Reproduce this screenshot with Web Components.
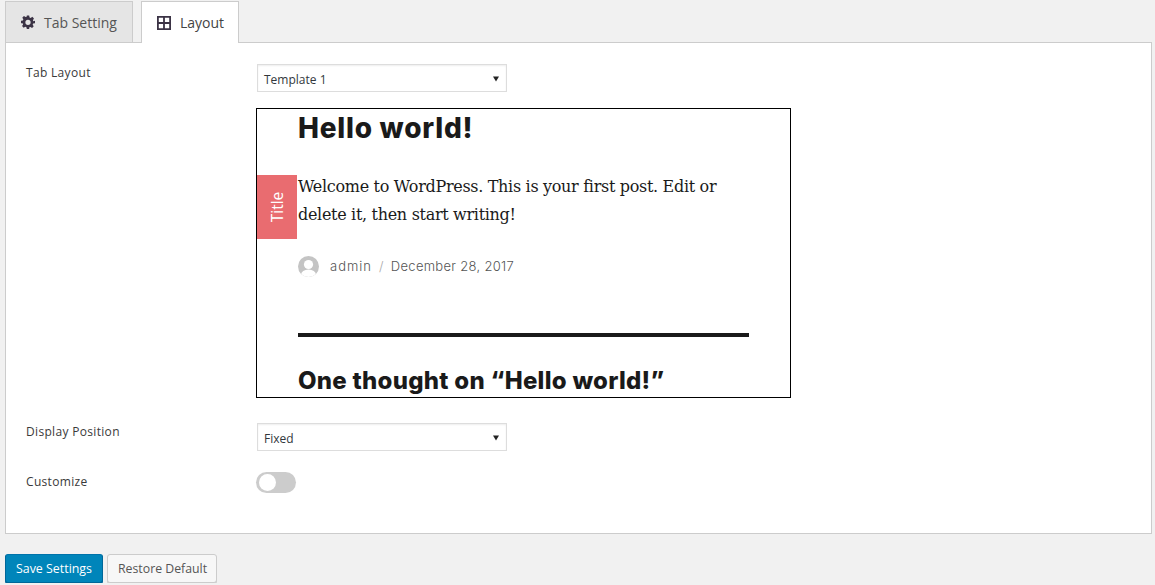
<!DOCTYPE html>
<html>
<head>
<meta charset="utf-8">
<title>Layout</title>
<style>
html, body { margin: 0; background: #f1f1f1; }
body { font-family: "Open Sans", "Noto Sans", sans-serif; color: #444; font-size: 13px; }
</style>
</head>
<body>
<settings-page></settings-page>

<template id="tab-tpl">
  <style>
    :host {
      display: flex; align-items: center; box-sizing: border-box; height: 41px;
      gap: 9px; padding: 0 15px; border: 1px solid #ccc; border-bottom: 0;
      background: #e5e5e5; color: #555; font-size: 14px; margin-bottom: 0;
    }
    :host([active]) { background: #fff; color: #444; height: 42px; margin-bottom: -1px; padding-right: 14px; position: relative; }
    ::slotted(svg) { display: block; }
  </style>
  <slot name="icon"></slot><slot></slot>
</template>

<template id="row-tpl">
  <style>
    :host { display: grid; grid-template-columns: 231px 1fr; }
    .label { font-size: 12px; font-weight: 500; color: #3a3a3a; line-height: 16px; padding-top: var(--label-top, 0); letter-spacing: .32px; }
    .body { display: flex; flex-direction: column; gap: 16px; align-items: flex-start; }
  </style>
  <div class="label"><slot name="label"></slot></div>
  <div class="body"><slot></slot></div>
</template>

<template id="select-tpl">
  <style>
    :host {
      display: flex; align-items: center; justify-content: space-between; box-sizing: border-box;
      width: 250px; height: 28px; padding: 2px 7px 0 6px; background: #fff; border: 1px solid #ddd;
      font-size: 12px; color: #32373c; box-shadow: inset 0 1px 2px rgba(0,0,0,.07);
    }
    svg { display: block; }
  </style>
  <slot></slot>
  <svg width="6" height="6" viewBox="0 0 6 6"><path d="M0 .5h6L3 5.500z" fill="#222"/></svg>
</template>

<template id="toggle-tpl">
  <style>
    :host { display: flex; align-items: center; box-sizing: border-box; width: 40px; height: 21px; margin-left: -1px; padding-left: 3px; border-radius: 11px; background: #ccc; }
    i { display: block; width: 17px; height: 17px; border-radius: 50%; background: #fff; }
  </style>
  <i></i>
</template>

<template id="preview-tpl">
  <style>
    :host {
      display: block; box-sizing: border-box; width: 535px; height: 290px; margin-left: -1px;
      border: 1px solid #000; background: #fff; overflow: hidden; position: relative; color: #1a1a1a;
    }
    .badge {
      position: absolute; left: 0; top: 66px; width: 40px; height: 64px; background: #e96c70; color: #fff;
      display: flex; align-items: center; justify-content: center; font-size: 15.5px;
      font-family: "Open Sans", sans-serif;
    }
    .badge span { transform: rotate(-90deg); white-space: nowrap; }
    .post { padding: 0 41px; }
    h1, h2 { font-family: Inter, "Noto Sans", sans-serif; margin: 0; color: #1a1a1a; font-weight: 800; }
    h1 { font-size: 28px; line-height: 38px; letter-spacing: .75px; }
    p { font-family: "DejaVu Serif", "Liberation Serif", serif; font-size: 16px; line-height: 28px; margin: 26px 0 0; color: #1a1a1a; letter-spacing: -.31px; }
    .meta { display: flex; align-items: center; height: 22px; margin-top: 26px; font-family: Inter, sans-serif; font-size: 13px; font-weight: 300; color: #555; letter-spacing: .3px; }
    .meta svg { display: block; margin-right: 11px; }
    .meta .who { letter-spacing: 1px; }
    .meta .sep { margin: 0 7px; color: #aaa; }
    hr { border: 0; height: 4px; background: #1a1a1a; margin: 56px 0 0; }
    h2 { font-size: 24px; line-height: 32px; margin-top: 28px; letter-spacing: .27px; }
  </style>
  <div class="badge"><span>Title</span></div>
  <div class="post">
    <h1>Hello world!</h1>
    <p>Welcome to WordPress. This is your first post. Edit or<br>delete it, then start writing!</p>
    <div class="meta">
      <svg width="21" height="21" viewBox="0 0 21 21">
        <defs><clipPath id="av"><circle cx="10.5" cy="10.5" r="10.5"/></clipPath></defs>
        <g clip-path="url(#av)">
          <rect width="21" height="21" fill="#c4c4c4"/>
          <circle cx="10.5" cy="8.5" r="4.6" fill="#fff"/>
          <ellipse cx="10.5" cy="19" rx="7.5" ry="5.5" fill="#fff"/>
        </g>
      </svg>
      <span class="who">admin</span><span class="sep">/</span><span>December 28, 2017</span>
    </div>
    <hr>
    <h2>One thought on “Hello world!”</h2>
  </div>
</template>

<template id="page-tpl">
  <style>
    :host { display: block; padding: 1px 3px 0 5px; }
    .tabs { display: flex; gap: 8px; height: 41px; align-items: flex-end; }
    .panel {
      box-sizing: border-box; height: 492px; background: #fff; border: 1px solid #ccc;
      padding: 21px 20px 0; display: flex; flex-direction: column;
    }
    form-row { --label-top: 1px; }
    .r2 { margin-top: 25px; }
    .r3 { margin-top: 21px; --label-top: 2px; }
    .footer { display: flex; gap: 4px; margin-top: 20px; }
    .btn {
      box-sizing: border-box; height: 29px; display: flex; align-items: center; padding: 0 9px 0 10px;
      font-size: 12.3px; border-radius: 3px; border: 1px solid #ccc; background: #f7f7f7; color: #555;
      box-shadow: 0 1px 0 #ccc;
    }
    .btn.primary { padding: 0 10px; font-size: 12.4px; background: #0085ba; border-color: #0073aa #006799 #006799; color: #fff; box-shadow: 0 1px 0 #006799; }
  </style>
  <div class="tabs">
    <tab-item>
      <svg slot="icon" width="14" height="14" viewBox="0 0 24 24"><path fill="#3b3345" fill-rule="evenodd" d="M10 1h4l.7 3.2 1.9.8 2.8-1.8 2.8 2.8-1.8 2.8.8 1.9L24 10v4l-3.2.7-.8 1.9 1.8 2.8-2.8 2.8-2.800-1.800-1.900.8L14 24h-4l-.7-3.200-1.900-.8-2.800 1.800-2.800-2.800 1.800-2.800-.8-1.900L0 14v-4l3.200-.7.8-1.900-1.800-2.800 2.800-2.800 2.800 1.800 1.900-.8zM12 8a4.500 4.500 0 1 0 0 9 4.500 4.500 0 0 0 0-9z"/></svg>
      Tab Setting
    </tab-item>
    <tab-item active>
      <svg slot="icon" width="14" height="14" viewBox="0 0 14 14"><path fill="none" stroke="#3b3345" stroke-width="1.8" d="M.9.9h12.200v12.200H.9zM7 .9v12.200M.9 7h12.200"/></svg>
      Layout
    </tab-item>
  </div>
  <div class="panel">
    <form-row>
      <span slot="label">Tab Layout</span>
      <select-box>Template 1</select-box>
      <layout-preview></layout-preview>
    </form-row>
    <form-row class="r2">
      <span slot="label">Display Position</span>
      <select-box>Fixed</select-box>
    </form-row>
    <form-row class="r3">
      <span slot="label">Customize</span>
      <toggle-switch></toggle-switch>
    </form-row>
  </div>
  <div class="footer">
    <div class="btn primary">Save Settings</div>
    <div class="btn">Restore Default</div>
  </div>
</template>

<script>
function define(name, tplId) {
  customElements.define(name, class extends HTMLElement {
    constructor() {
      super();
      this.attachShadow({ mode: 'open' });
      this.shadowRoot.appendChild(document.getElementById(tplId).content.cloneNode(true));
    }
  });
}
define('tab-item', 'tab-tpl');
define('form-row', 'row-tpl');
define('select-box', 'select-tpl');
define('toggle-switch', 'toggle-tpl');
define('layout-preview', 'preview-tpl');
define('settings-page', 'page-tpl');
</script>
</body>
</html>
